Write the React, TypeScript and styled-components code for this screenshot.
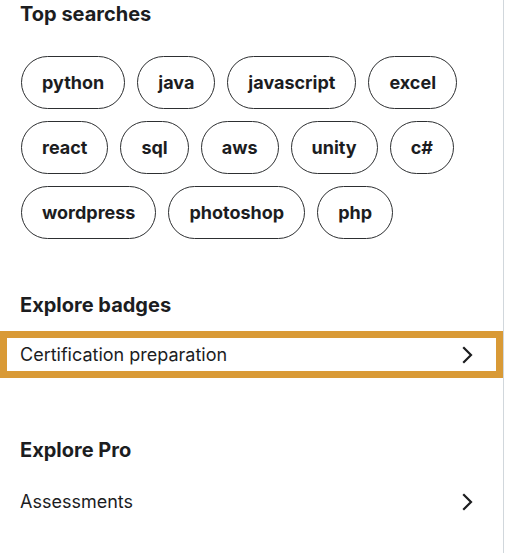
import React from "react";
import styled, { createGlobalStyle } from "styled-components";

const Global = createGlobalStyle`
  html, body { margin: 0; padding: 0; background: #fff; }
  body { font-family: Inter, "Liberation Sans", Arial, sans-serif; color: #1c1d1f; }
  * { box-sizing: border-box; }
`;

const Panel = styled.nav`
  width: 504px;
  min-height: 553px;
  border-right: 1px solid #d1d7dc;
  padding-top: 2px;
  display: flex;
  flex-direction: column;
`;

const Section = styled.section<{ $gap: number }>`
  display: flex;
  flex-direction: column;
  margin-bottom: ${(p) => p.$gap}px;
`;

const Heading = styled.h2`
  margin: 0;
  padding: 0 20px;
  font-size: 20px;
  line-height: 24px;
  font-weight: 700;
  color: #1c1d1f;
`;

const PillWrap = styled.div`
  display: flex;
  flex-wrap: wrap;
  gap: 12px 12px;
  padding: 30px 20px 0 21px;
  width: 484px;
`;

const Pill = styled.button`
  height: 53px;
  padding: 0 20px;
  border: 1px solid #2d2f31;
  border-radius: 999px;
  background: #fff;
  font-family: inherit;
  font-size: 18px;
  font-weight: 700;
  color: #1c1d1f;
  cursor: pointer;
`;

const Spacer = styled.div<{ $h: number }>`
  height: ${(p) => p.$h}px;
`;

const Row = styled.a<{ $focused?: boolean }>`
  display: flex;
  align-items: center;
  justify-content: space-between;
  height: 47px;
  padding: 0 28px 0 20px;
  font-size: 18px;
  color: #1c1d1f;
  text-decoration: none;
  border: ${(p) => (p.$focused ? "7px solid #d99a36" : "none")};
  ${(p) => (p.$focused ? "padding-left: 13px; padding-right: 21px;" : "")}
`;

const Chevron = () => (
  <svg width="14" height="18" viewBox="0 0 14 18" fill="none">
    <path d="M3 2l7 7-7 7" stroke="#1c1d1f" strokeWidth="2.2" strokeLinecap="square" strokeLinejoin="miter" />
  </svg>
);

const searches = [
  "python", "java", "javascript", "excel", "react", "sql", "aws", "unity", "c#",
  "wordpress", "photoshop", "php",
];

export default function App() {
  return (
    <>
      <Global />
      <Panel>
        <Section $gap={54}>
          <Heading>Top searches</Heading>
          <PillWrap>
            {searches.map((s) => (
              <Pill key={s}>{s}</Pill>
            ))}
          </PillWrap>
        </Section>
        <Section $gap={60}>
          <Heading>Explore badges</Heading>
          <Spacer $h={14} />
          <Row href="#" $focused>
            <span>Certification preparation</span>
            <Chevron />
          </Row>
        </Section>
        <Section $gap={0}>
          <Heading>Explore Pro</Heading>
          <Spacer $h={16} />
          <Row href="#">
            <span>Assessments</span>
            <Chevron />
          </Row>
        </Section>
      </Panel>
    </>
  );
}
